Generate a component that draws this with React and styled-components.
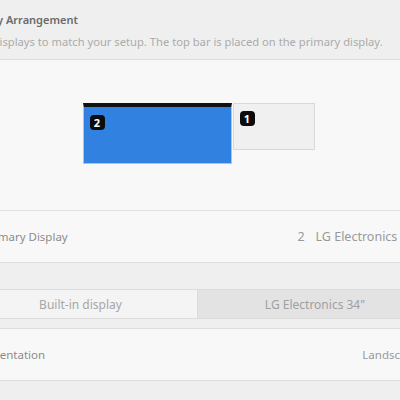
import React from 'react';
import styled, { createGlobalStyle } from 'styled-components';

const GlobalStyle = createGlobalStyle`
  html, body {
    margin: 0;
    padding: 0;
    background: #efefef;
    overflow: hidden;
  }
  body {
    font-family: 'Noto Sans', 'Open Sans', sans-serif;
  }
`;

const monitors = [
  { id: 2, width: 149, height: 61, primary: true },
  { id: 1, width: 82, height: 47, primary: false },
];

export default function App() {
  return (
    <>
      <GlobalStyle />
      <StPage>
        <StHeader>
          <h2>Display Arrangement</h2>
          <p>Drag displays to match your setup. The top bar is placed on the primary display.</p>
        </StHeader>

        <StFrame>
          <StArrangement>
            {monitors.map((m) => (
              <StMonitor
                key={m.id}
                $primary={m.primary}
                style={{ width: m.width, height: m.height }}
              >
                <StBadge>{m.id}</StBadge>
              </StMonitor>
            ))}
          </StArrangement>
          <StRow>
            <span>Primary Display</span>
            <StValue $size={12.5}>
              <span>2</span>
              <span>LG Electronics 34"</span>
            </StValue>
          </StRow>
        </StFrame>

        <StTabs>
          <StTab>Built-in display</StTab>
          <StTab $active>LG Electronics 34"</StTab>
        </StTabs>

        <StFrame>
          <StRow>
            <span>Orientation</span>
            <StValue>
              <span>Landscape</span>
            </StValue>
          </StRow>
        </StFrame>
      </StPage>
    </>
  );
}

const StPage = styled.div`
  width: 468px;
  margin-left: -36px;
`;

const StHeader = styled.header`
  padding: 12px 0 9px 0;

  h2 {
    margin: 0;
    font-size: 11px;
    line-height: 16px;
    font-weight: 600;
    color: #6a6a6a;
  }

  p {
    margin: 6px 0 0 0;
    font-size: 11.2px;
    line-height: 16px;
    color: #ababab;
  }
`;

const StFrame = styled.section`
  background: #f8f8f8;
  border-top: 1px solid #dddddd;
  border-bottom: 1px solid #dddddd;
`;

const StArrangement = styled.div`
  height: 150px;
  padding-top: 43px;
  box-sizing: border-box;
  display: flex;
  justify-content: center;
  align-items: flex-start;
`;

const StMonitor = styled.div`
  box-sizing: border-box;
  padding: ${(p) => (p.$primary ? '8px 6px' : '7px 6px')};
  background: ${(p) => (p.$primary ? '#3182e0' : '#f0f0f0')};
  border: 1px solid ${(p) => (p.$primary ? '#a8c4e8' : '#d9d9d9')};
  border-top: ${(p) => (p.$primary ? '4px solid #111' : '1px solid #d9d9d9')};
  margin-left: 1px;
`;

const StBadge = styled.div`
  width: 15px;
  height: 15px;
  border-radius: 4px;
  background: #0c0c0c;
  color: #fff;
  font-size: 11px;
  font-weight: 700;
  line-height: 15px;
  text-align: center;
`;

const StRow = styled.div`
  height: 51px;
  padding: 0 12px 0 19px;
  display: flex;
  align-items: center;
  justify-content: space-between;
  font-size: 11.5px;
  color: #8c8c8c;
  border-top: 1px solid #e3e3e3;

  &:first-child {
    border-top: none;
  }
`;

const StValue = styled.div`
  display: flex;
  gap: 11px;
  font-size: ${(p) => p.$size || 11.5}px;
  color: #999999;
`;

const StTabs = styled.nav`
  margin-top: 26px;
  margin-bottom: 9px;
  display: grid;
  grid-template-columns: 1fr 1fr;
  border-top: 1px solid #dcdcdc;
  border-bottom: 1px solid #dcdcdc;
`;

const StTab = styled.div`
  height: 28px;
  display: flex;
  align-items: center;
  justify-content: center;
  font-size: 12px;
  color: ${(p) => (p.$active ? '#a0a0a0' : '#a6a6a6')};
  background: ${(p) => (p.$active ? '#e3e3e3' : '#f4f4f4')};
  border-right: ${(p) => (p.$active ? 'none' : '1px solid #dcdcdc')};
`;
